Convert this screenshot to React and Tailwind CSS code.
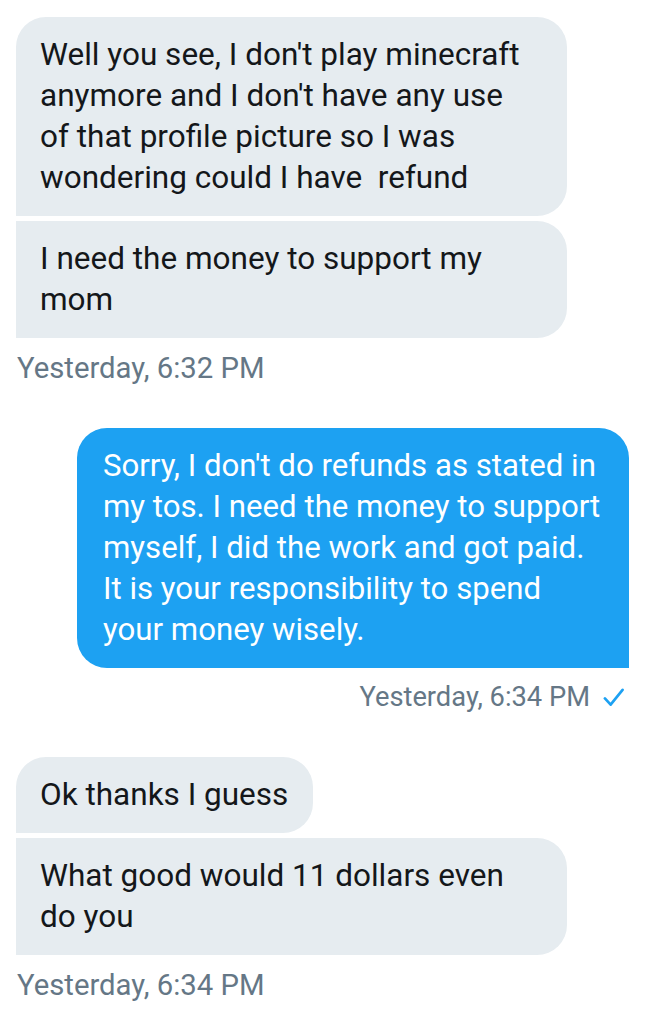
import React from "react";

const font = { fontFamily: "Roboto, 'Noto Sans', sans-serif" };

function Gray({ children, className = "" }) {
  return (
    <div
      className={`bg-[#e6ecf0] text-[#14171a] text-[31.5px] leading-[41px] pl-[24px] pr-[40px] pt-[17px] pb-[18px] ${className}`}
    >
      {children}
    </div>
  );
}

function Stamp({ children }) {
  return (
    <div className="text-[#657786] text-[29.3px] leading-[34px] mt-[13px] pl-[1px]">
      {children}
    </div>
  );
}

export default function App() {
  return (
    <div className="w-[654px] h-[1024px] bg-white overflow-hidden pt-[17px]" style={font}>
      <div className="flex flex-col items-start pl-[16px]">
        <Gray className="w-[551px] rounded-tl-[30px] rounded-tr-[30px] rounded-br-[30px]">
          Well you see, I don't play minecraft anymore and I don't have any use of that profile picture so I was wondering could I have&nbsp; refund
        </Gray>
        <Gray className="w-[551px] mt-[5px] rounded-tr-[30px] rounded-br-[30px]">
          I need the money to support my mom
        </Gray>
        <Stamp>Yesterday, 6:32 PM</Stamp>
      </div>

      <div className="flex flex-col items-end pr-[25px] mt-[43px]">
        <div className="w-[552px] bg-[#1da1f2] text-white text-[31.2px] leading-[41px] pl-[26px] pr-[28px] pt-[17px] pb-[18px] rounded-tl-[30px] rounded-tr-[30px] rounded-bl-[30px]">
          Sorry, I don't do refunds as stated in my tos. I need the money to support myself, I did the work and got paid. It is your responsibility to spend your money wisely.
        </div>
        <div className="flex items-center gap-[13px] mt-[12px] pr-[5px] text-[#657786] text-[27.3px] leading-[34px]">
          <span>Yesterday, 6:34 PM</span>
          <svg width="21" height="21" viewBox="0 0 22 22" fill="none">
            <path d="M2 12 L8 18.5 L20.5 3" stroke="#1da1f2" strokeWidth="2.8" strokeLinecap="round" strokeLinejoin="round" />
          </svg>
        </div>
      </div>

      <div className="flex flex-col items-start pl-[16px] mt-[43px]">
        <Gray className="w-[297px] pr-[0px] whitespace-nowrap rounded-tl-[30px] rounded-tr-[30px] rounded-br-[30px]">
          Ok thanks I guess
        </Gray>
        <Gray className="w-[551px] mt-[5px] rounded-tr-[30px] rounded-br-[30px]">
          What good would 11 dollars even do you
        </Gray>
        <Stamp>Yesterday, 6:34 PM</Stamp>
      </div>
    </div>
  );
}
